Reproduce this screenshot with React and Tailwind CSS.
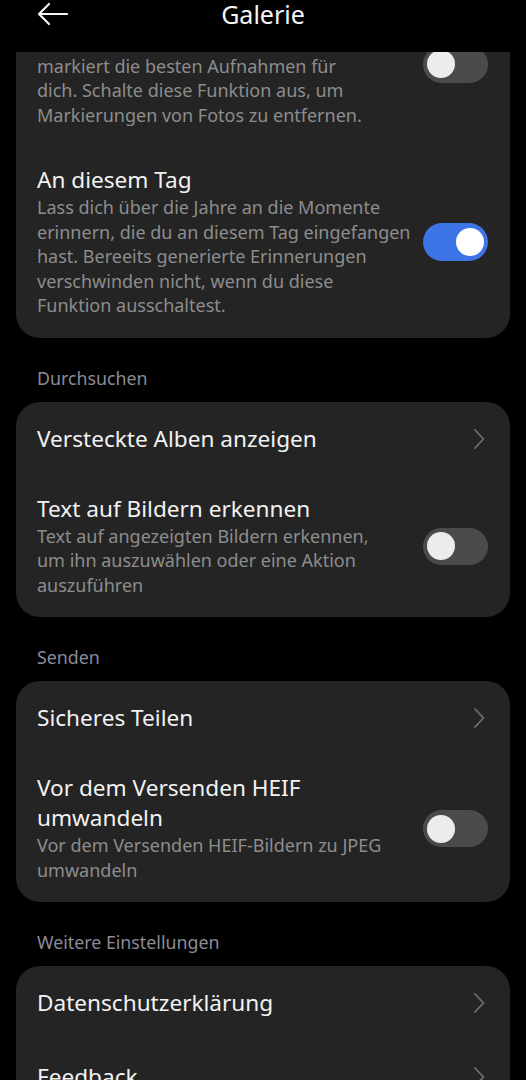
import React from 'react';

const sections = [
  {
    label: null,
    rows: [
      {
        title: 'Highlights',
        lines: [
          'Die Galerie erkennt automatisch und',
          'markiert die besten Aufnahmen für',
          'dich. Schalte diese Funktion aus, um',
          'Markierungen von Fotos zu entfernen.',
        ],
        toggle: false,
      },
      {
        title: 'An diesem Tag',
        lines: [
          'Lass dich über die Jahre an die Momente',
          'erinnern, die du an diesem Tag eingefangen',
          'hast. Bereeits generierte Erinnerungen',
          'verschwinden nicht, wenn du diese',
          'Funktion ausschaltest.',
        ],
        toggle: true,
      },
    ],
  },
  {
    label: 'Durchsuchen',
    rows: [
      { title: 'Versteckte Alben anzeigen', chevron: true },
      {
        title: 'Text auf Bildern erkennen',
        lines: [
          'Text auf angezeigten Bildern erkennen,',
          'um ihn auszuwählen oder eine Aktion',
          'auszuführen',
        ],
        toggle: false,
      },
    ],
  },
  {
    label: 'Senden',
    rows: [
      { title: 'Sicheres Teilen', chevron: true },
      {
        titleLines: ['Vor dem Versenden HEIF', 'umwandeln'],
        lines: ['Vor dem Versenden HEIF-Bildern zu JPEG', 'umwandeln'],
        toggle: false,
      },
    ],
  },
  {
    label: 'Weitere Einstellungen',
    rows: [
      { title: 'Datenschutzerklärung', chevron: true },
      { title: 'Feedback', chevron: true },
    ],
  },
];

const Toggle = ({ on }) => (
  <div
    className={
      on
        ? 'w-[65px] h-[38px] rounded-full bg-[#3d75e6] flex items-center justify-end px-[4px] shrink-0'
        : 'w-[65px] h-[37px] rounded-full bg-[#4b4b4b] flex items-center justify-start px-[4px] shrink-0'
    }
  >
    <div className={on ? 'w-[28px] h-[28px] rounded-full bg-white' : 'w-[28px] h-[28px] rounded-full bg-[#ececec]'} />
  </div>
);

const Chevron = () => (
  <svg width="14" height="22" viewBox="0 0 14 22" className="shrink-0 mr-[1px]">
    <path d="M3 2 L11.5 11 L3 20" fill="none" stroke="#6f6f6f" strokeWidth="1.8" strokeLinecap="round" strokeLinejoin="round" />
  </svg>
);

const Row = ({ row }) => {
  if (row.chevron) {
    return (
      <div className="h-[74px] flex items-center justify-between pl-[21px] pr-[23px]">
        <span className="text-[22.6px] leading-[30px] text-[#f2f2f2]">{row.title}</span>
        <Chevron />
      </div>
    );
  }
  const titles = row.titleLines || [row.title];
  return (
    <div className="flex items-center justify-between pl-[21px] pr-[22px] py-[19px] gap-3">
      <div className="relative -top-[1px] flex flex-col">
        {titles.map((t) => (
          <span key={t} className="text-[22.6px] leading-[30px] text-[#f2f2f2]">{t}</span>
        ))}
        {row.lines.map((l) => (
          <span key={l} className="text-[18px] leading-[24.5px] text-[#8d8d8d] whitespace-nowrap">{l}</span>
        ))}
      </div>
      <Toggle on={row.toggle} />
    </div>
  );
};

export default function App() {
  return (
    <div
      className="w-[526px] h-[1080px] bg-black flex flex-col overflow-hidden"
      style={{ fontFamily: '"Noto Sans", Inter, sans-serif' }}
    >
      <div className="h-[52px] shrink-0 relative flex items-start justify-center">
        <svg width="32" height="24" viewBox="0 0 32 24" className="absolute left-[37px] top-[2px]">
          <path d="M30 12 H2 M12 2 L2 12 L12 22" fill="none" stroke="#f5f5f5" strokeWidth="2.2" strokeLinecap="round" strokeLinejoin="round" />
        </svg>
        <span className="text-[25px] leading-[28px] text-[#f5f5f5]">Galerie</span>
      </div>
      <div className="flex-1 overflow-hidden">
        <div className="-mt-[71px] px-[16px] flex flex-col">
          {sections.map((s, i) => (
            <div key={i} className="flex flex-col">
              {s.label && (
                <div className="pt-[28px] pb-[12px] pl-[21px] text-[17.8px] leading-[24px] text-[#8b8b96]">
                  {s.label}
                </div>
              )}
              <div className="bg-[#242424] rounded-[24px] flex flex-col">
                {s.rows.map((r, j) => (
                  <Row key={j} row={r} />
                ))}
              </div>
            </div>
          ))}
        </div>
      </div>
    </div>
  );
}
